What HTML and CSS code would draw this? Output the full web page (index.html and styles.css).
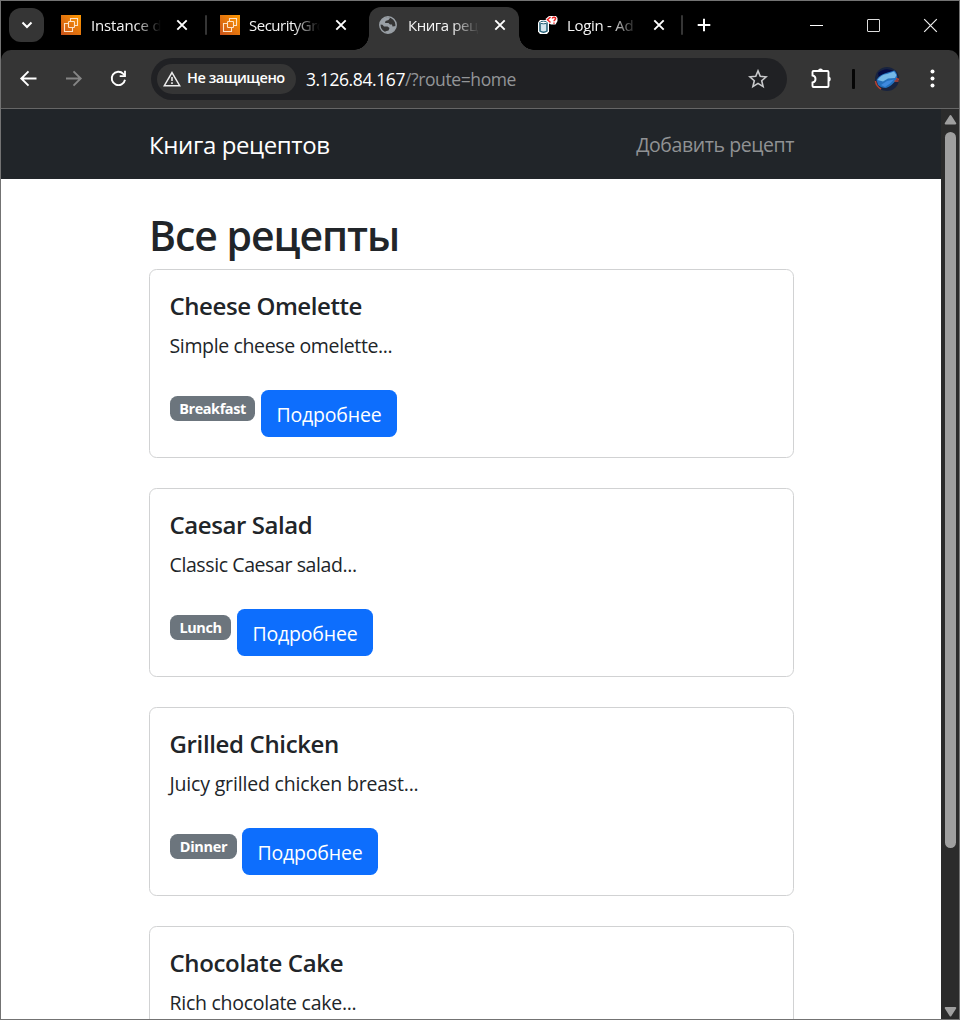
FILE: index.html
```html
<!DOCTYPE html>
<html lang="ru">
<head>
<meta charset="utf-8">
<title>Книга рецептов</title>
<link rel="stylesheet" href="styles.css">
</head>
<body>
<svg class="defs" width="0" height="0">
  <defs>
    <linearGradient id="orange" x1="0" y1="1" x2="1" y2="0"><stop offset="0" stop-color="#c8511b"/><stop offset="1" stop-color="#f90"/></linearGradient>
    <symbol id="ec2" viewBox="0 0 20 20"><rect width="20" height="20" fill="url(#orange)"/><g fill="none" stroke="#fde3c8" stroke-width="1.100"><rect x="7.500" y="6.500" width="6" height="6" rx=".7"/><path d="M9.500 6.500V3.500H16.500V10.500H13.500M7.500 8.500H3.500V16.500H11.500V12.500"/></g></symbol>
    <symbol id="x" viewBox="0 0 12 12"><path d="M1.300 1.300L10.700 10.700M10.700 1.300L1.300 10.700" stroke="#fff" stroke-width="1.900"/></symbol>
  </defs>
</svg>
<div class="window">
  <div class="tabstrip">
    <button class="tab-search" aria-label="tabs"><svg width="12" height="8" viewBox="0 0 12 8"><path d="M1.500 1.500L6 6L10.500 1.500" fill="none" stroke="#fff" stroke-width="2"/></svg></button>
    <div class="tab first"><svg class="fav"><use href="#ec2"/></svg><span class="title t-instance">Instance de</span><svg class="close"><use href="#x"/></svg></div>
    <i class="tab-sep"></i>
    <div class="tab"><svg class="fav"><use href="#ec2"/></svg><span class="title t-security">SecurityGro</span><svg class="close"><use href="#x"/></svg></div>
    <div class="tab active">
      <svg class="fav globe" viewBox="0 0 20 20"><circle cx="10" cy="10" r="8.200" fill="#353535" stroke="#9aa0a6" stroke-width="1.500"/><path d="M2 9.500V7L5 3.500L10 2L12 3L10.500 5L7.500 6L7 8H10.500L12 9.500H14L14.500 11.500L18 11L16.500 15L12 18L8.500 18L7 16.500L10.500 15.500L11.500 13L9.500 11.500H6L4.500 9.800Z" fill="#9aa0a6"/></svg>
      <span class="title t-book">Книга реце</span><svg class="close"><use href="#x"/></svg></div>
    <div class="tab login">
      <svg class="fav" viewBox="0 0 20 20"><path d="M0 7.500L2 5H9L11 7.500V16.500L9 19H2L0 16.500Z" fill="#fff"/><path d="M2 7.500V16Q5.500 18.500 9 16V7.500" fill="#d5e6ee" stroke="#235f76" stroke-width="1.500"/><ellipse cx="5.500" cy="7.500" rx="3.500" ry="1.300" fill="#fff" stroke="#235f76"/><path d="M7.500 4L11 1H18L19.500 3V6L17.500 9.500H13L10 8Z" fill="#fff"/><path d="M12.500 2L9.500 4.800L12.500 7.500M14.200 3.500Q14.700 2 16.200 2.200Q18.700 2.800 16.900 4.800Q16 5.500 16 6.300M16 7.500V8.800" fill="none" stroke="#e22" stroke-width="1.500"/></svg>
      <span class="title t-login">Login - Ad</span><svg class="close"><use href="#x"/></svg></div>
    <i class="tab-sep last"></i>
    <svg class="plus" width="14" height="14" viewBox="0 0 14 14"><path d="M7 .7V13.300M.7 7H13.300" stroke="#fff" stroke-width="2"/></svg>
    <div class="controls">
      <svg width="15" height="15" viewBox="0 0 15 15"><path d="M1 7.500H14" stroke="#fff"/></svg>
      <svg width="15" height="15" viewBox="0 0 15 15"><rect x="1.500" y="1.500" width="12" height="12" rx=".5" fill="none" stroke="#ddd"/></svg>
      <svg width="15" height="15" viewBox="0 0 15 15"><path d="M1.200 1.200L13.800 13.800M13.800 1.200L1.200 13.800" stroke="#eee" stroke-width="1.200"/></svg>
    </div>
  </div>
  <div class="toolbar">
    <svg class="nav-icon" viewBox="0 0 20 20"><path d="M17.500 9.500H3M9.500 2.300L2.300 9.500L9.500 16.700" fill="none" stroke="#fff" stroke-width="1.900"/></svg>
    <svg class="nav-icon" viewBox="0 0 20 20"><path d="M2 9.500H16M9.500 2.300L16.700 9.500L9.500 16.700" fill="none" stroke="#858585" stroke-width="1.900"/></svg>
    <svg class="nav-icon reload" viewBox="0 0 20 20"><path d="M16 10.700A6.700 6.700 0 1 1 14.300 4.800L16 6.500" fill="none" stroke="#fff" stroke-width="1.900"/><path d="M16.900 1.800V8H10.700V6.200H15.100V1.800Z" fill="#fff"/></svg>
    <div class="omnibox">
      <div class="chip"><svg width="18" height="16" viewBox="0 0 18 16"><path d="M9 1.600L16.700 14.700H1.300Z" fill="none" stroke="#eee" stroke-width="1.500"/><path d="M9 6V10M9 11.200V12.900" stroke="#eee" stroke-width="1.600"/></svg><span class="chip-text">Не защищено</span></div>
      <div class="url"><span class="host">3.126.84.167</span><span class="path">/?route=home</span></div>
      <svg class="star" width="20" height="20" viewBox="0 0 20 20"><path d="M10 1.900L12.250 7.300L18.200 7.800L13.700 11.700L15.100 17.600L10 14.400L4.900 17.600L6.300 11.700L1.800 7.800L7.750 7.300Z" fill="none" stroke="#c9cacc" stroke-width="1.600"/></svg>
    </div>
    <svg class="ext" width="22" height="22" viewBox="0 0 22 22"><path d="M3.500 3H17.500Q18.500 3 18.500 4V18Q18.500 19 17.500 19H3.500Q2.500 19 2.500 18V14.500Q5.500 14 5.500 11Q5.500 8 2.500 7.500V4Q2.500 3 3.500 3Z" fill="none" stroke="#fff" stroke-width="1.900"/><path d="M8 3A2.500 2.500 0 0 1 13 3ZM18.500 8.500A2.300 2.500 0 0 1 18.500 13.500Z" fill="#fff"/></svg>
    <i class="tool-sep"></i>
    <svg class="avatar" width="26" height="26" viewBox="0 0 26 26"><circle cx="13" cy="13" r="12" fill="#18233f"/><path d="M4 7Q12 0 21 6L17 9L5 12Z" fill="#020a45"/><path d="M2.500 14Q5 9 12 7L20.500 4.500Q24 8 23 13Q18 20 12 22Q7 22 4 19Z" fill="#2470bd"/><path d="M3.500 14Q7 8.500 13 8L20 5.500L22.500 9L21 12L14 12.500L9 15.500Z" fill="#75b9e8"/><path d="M7 19L13 15L20 13.500L16 17.500L11 21Z" fill="#3f8ae0"/><path d="M1.500 15Q2 20 7 23M20.500 15H24.500M22 12.500L25 13.500" fill="none" stroke="#b94332" stroke-width="1.500"/></svg>
    <svg class="dots" width="6" height="20" viewBox="0 0 6 20"><g fill="#fff"><circle cx="2.500" cy="2.500" r="2"/><circle cx="2.500" cy="9.500" r="2"/><circle cx="2.500" cy="16.500" r="2"/></g></svg>
  </div>
  <div class="viewport">
    <div class="page">
      <nav class="navbar"><a class="brand">Книга рецептов</a><a class="add">Добавить рецепт</a></nav>
      <main class="content">
        <h1><span>Все рецепты</span></h1>
        <article class="card"><h5 class="n1">Cheese Omelette</h5><p class="d1">Simple cheese omelette...</p><div class="row"><span class="badge b1">Breakfast</span><a class="btn">Подробнее</a></div></article>
        <article class="card"><h5 class="n2">Caesar Salad</h5><p class="d2">Classic Caesar salad...</p><div class="row"><span class="badge b2">Lunch</span><a class="btn">Подробнее</a></div></article>
        <article class="card"><h5 class="n3">Grilled Chicken</h5><p class="d3">Juicy grilled chicken breast...</p><div class="row"><span class="badge b3">Dinner</span><a class="btn">Подробнее</a></div></article>
        <article class="card"><h5 class="n4">Chocolate Cake</h5><p class="d4">Rich chocolate cake...</p></article>
      </main>
    </div>
    <div class="scrollbar">
      <svg width="14" height="11" viewBox="0 0 14 11"><path d="M7.500 2L12.300 9.500H2.700Z" fill="#9f9f9f" stroke="#9f9f9f" stroke-width="2" stroke-linejoin="round"/></svg>
      <div class="thumb"></div>
      <svg class="down" width="14" height="11" viewBox="0 0 14 11"><path d="M7.500 9.500L12.300 2H2.700Z" fill="#9f9f9f" stroke="#9f9f9f" stroke-width="2" stroke-linejoin="round"/></svg>
    </div>
  </div>
</div>
</body>
</html>
```
FILE: styles.css
```css
* { box-sizing: border-box; }
body { margin: 0; font-family: "Open Sans", "Noto Sans", sans-serif; background: #000; }
svg { display: block; flex: none; }
.defs { position: absolute; }
.window { width: 960px; height: 1020px; border: 1px solid #737373; background: #000; display: flex; flex-direction: column; overflow: hidden; }
.tabstrip { height: 49px; flex: none; display: flex; padding-left: 8px; background: #000; }
.tab-search { margin: 7px 0 0; width: 35px; height: 34px; border: 0; padding: 0; border-radius: 12px; background: #353535; display: flex; align-items: center; justify-content: center; }
.tab { width: 150px; height: 43px; margin-top: 6px; padding: 0 13px 7px 10px; display: flex; align-items: center; }
.tab.first { margin-left: 7px; width: 155px; padding-right: 18px; padding-left: 10px; }
.tab.active { position: relative; background: #353535; border-radius: 12px 12px 0 0; margin-left: 9px; }
.tab.active::before, .tab.active::after { content: ""; position: absolute; bottom: 0; width: 15px; height: 15px; }
.tab.active::before { left: -15px; background: radial-gradient(circle at 0 0, transparent 14.500px, #353535 15px); }
.tab.active::after { right: -15px; background: radial-gradient(circle at 100% 0, transparent 14.500px, #353535 15px); }
.tab.login { margin-left: 9px; }
.fav { width: 20px; height: 20px; margin-right: 10px; }
.tab-sep + .tab .fav { margin-right: 9px; }
.globe { margin-left: -1px; }
.login .fav { margin-right: 9px; }
.title { flex: 1; min-width: 0; color: #f5f5f5; font-size: 15px; line-height: 22px; letter-spacing: -.3px; white-space: nowrap; margin-right: 15px; -webkit-mask-image: linear-gradient(90deg, #000 62%, transparent 100%); mask-image: linear-gradient(90deg, #000 62%, transparent 100%); }
.t-instance { letter-spacing: -.15px; }
.t-security { letter-spacing: -.5px; }
.t-book { letter-spacing: -.45px; }
.close { width: 12px; height: 12px; }
.tab-sep { width: 2px; height: 20px; margin: 14px 0 0 -1px; border-radius: 1px; background: #353535; }
.tab-sep.last { margin-left: 3px; }
.tab-sep + .tab { margin-left: 3px; }
.plus { margin: 17px 0 0 14px; }
.controls { margin: 17px 21px 0 auto; display: flex; gap: 42px; }
.toolbar { height: 59px; flex: none; background: #353535; border-bottom: 1px solid #666; border-radius: 10px 10px 0 0; display: flex; align-items: center; padding-left: 18px; }
.nav-icon { width: 20px; height: 20px; margin-right: 25px; }
.reload { margin-right: 22px; }
.omnibox { width: 636px; height: 42px; border-radius: 21px; background: #202124; display: flex; align-items: center; padding: 0 19px 0 6px; }
.chip { width: 139px; height: 30px; border-radius: 15px; background: #353535; display: flex; align-items: center; gap: 6px; padding-left: 6px; }
.chip-text { color: #fff; font-size: 14.500px; font-weight: 600; letter-spacing: -.45px; line-height: 20px; margin-top: -2px; white-space: nowrap; }
.url { margin-left: 10px; font-size: 17.500px; letter-spacing: -.4px; white-space: nowrap; }
.host { color: #fff; }
.path { color: #939598; }
.star { margin-left: auto; }
.ext { margin-left: 23px; }
.tool-sep { width: 3px; height: 20px; border-radius: 1px; background: #050505; margin-left: 20px; }
.avatar { margin-left: 19px; }
.dots { margin-left: 30px; }
.viewport { flex: 1; min-height: 0; display: flex; }
.page { width: 940px; overflow: hidden; background: #fff; color: #212529; white-space: nowrap; }
.navbar { height: 70px; padding: 0 147px 0 148px; background: #212529; display: flex; align-items: center; justify-content: space-between; }
.brand { color: #fff; font-size: 24px; letter-spacing: -.38px; }
.add { color: #909294; font-size: 19.500px; letter-spacing: -.42px; padding-top: 1px; }
.content { padding: 31px 147px 0 148px; }
h1 { margin: 0 0 9px; font-size: 41px; line-height: 50px; font-weight: 600; letter-spacing: -1.050px; }
.card { height: 189px; border: 1px solid #d1d2d3; border-radius: 7.500px; padding: 23px 20px 0 19.500px; margin-bottom: 30px; }
h5 { margin: 0 0 12px; font-size: 24px; line-height: 26px; font-weight: 600; letter-spacing: -.35px; }
.n1, .n2 { letter-spacing: -.42px; }
p { margin: 0; font-size: 19.500px; line-height: 30px; }
.d1 { letter-spacing: -.36px; }
.d2 { letter-spacing: -.4px; }
.d3 { letter-spacing: -.18px; }
.d4 { letter-spacing: -.27px; }
.row { display: flex; margin: 29px 0 0 .5px; gap: 6px; }
.badge { height: 25px; margin-top: 6px; border-radius: 7.500px; background: #6c757d; color: #fff; font-size: 14.500px; line-height: 25px; font-weight: 700; letter-spacing: -.45px; text-align: center; }
.b1 { width: 85px; }
.b2 { width: 61px; }
.b3 { width: 67px; margin-right: -1px; letter-spacing: -.3px; }
.btn { width: 136px; height: 47px; border-radius: 7.500px; background: #0d6efd; color: #fff; font-size: 19.500px; letter-spacing: -.2px; line-height: 50px; text-align: center; }
.scrollbar { width: 18px; background: #2b2b2b; display: flex; flex-direction: column; align-items: center; padding: 5px 0 2px; }
.thumb { width: 11px; height: 716px; margin-top: 7px; border-radius: 6px; background: #9f9f9f; }
.down { margin-top: auto; }
```
